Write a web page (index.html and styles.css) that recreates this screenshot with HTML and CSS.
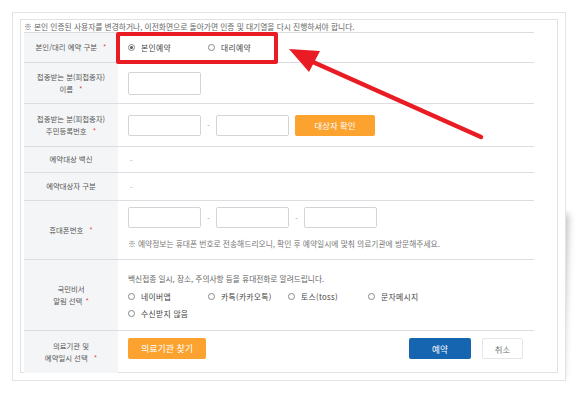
FILE: index.html
```html
<!DOCTYPE html>
<html lang="ko">
<head>
    <meta charset="UTF-8">
    <meta name="viewport" content="width=device-width, initial-scale=1.0">
    <title>예약 정보 입력</title>
    <link rel="stylesheet" href="styles.css">
</head>
<body>

    <div class="sheet">
        <div class="panel">
            <p class="notice">※ 본인 인증된 사용자를 변경하거나, 이전화면으로 돌아가면 인증 및 대기열을 다시 진행하셔야 합니다.</p>

            <!-- 예약 구분 -->
            <div class="row row-type">
                <div class="label"><span>본인/대리 예약 구분<em class="req">*</em></span></div>
                <div class="value">
                    <label class="radio"><span class="dot checked"></span>본인예약</label>
                    <label class="radio"><span class="dot"></span>대리예약</label>
                </div>
            </div>

            <div class="row row-name">
                <div class="label"><span>접종받는 분(피접종자)<br>이름<em class="req">*</em></span></div>
                <div class="value">
                    <input type="text" class="field">
                </div>
            </div>

            <div class="row row-id">
                <div class="label"><span>접종받는 분(피접종자)<br>주민등록번호<em class="req">*</em></span></div>
                <div class="value">
                    <input type="text" class="field">
                    <span class="dash">-</span>
                    <input type="text" class="field">
                    <button class="btn btn-orange btn-check">대상자 확인</button>
                </div>
            </div>

            <div class="row row-vaccine">
                <div class="label"><span>예약대상 백신</span></div>
                <div class="value"><span class="empty">-</span></div>
            </div>

            <div class="row row-target">
                <div class="label"><span>예약대상자 구분</span></div>
                <div class="value"><span class="empty">-</span></div>
            </div>

            <div class="row row-phone">
                <div class="label"><span>휴대폰번호<em class="req">*</em></span></div>
                <div class="value value-col">
                    <div class="inline">
                        <input type="text" class="field">
                        <span class="dash">-</span>
                        <input type="text" class="field">
                        <span class="dash">-</span>
                        <input type="text" class="field">
                    </div>
                    <p class="hint">※ 예약정보는 휴대폰 번호로 전송해드리오니, 확인 후 예약일시에 맞춰 의료기관에 방문해주세요.</p>
                </div>
            </div>

            <div class="row row-alarm">
                <div class="label"><span>국민비서<br>알림 선택<em class="req req-tight">*</em></span></div>
                <div class="value value-col">
                    <p class="desc">백신접종 일시, 장소, 주의사항 등을 휴대전화로 알려드립니다.</p>
                    <div class="options">
                        <label class="radio"><span class="dot"></span>네이버앱</label>
                        <label class="radio"><span class="dot"></span>카톡(카카오톡)</label>
                        <label class="radio"><span class="dot"></span>토스(toss)</label>
                        <label class="radio"><span class="dot"></span>문자메시지</label>
                        <label class="radio"><span class="dot"></span>수신받지 않음</label>
                    </div>
                </div>
            </div>

            <div class="row row-hospital">
                <div class="label"><span>의료기관 및<br>예약일시 선택<em class="req">*</em></span></div>
                <div class="value value-top">
                    <button class="btn btn-orange btn-find">의료기관 찾기</button>
                    <div class="actions">
                        <button class="btn btn-blue">예약</button>
                        <button class="btn btn-cancel">취소</button>
                    </div>
                </div>
            </div>
        </div>

        <!-- annotation -->
        <div class="highlight"></div>
        <svg class="arrow" width="578" height="395" viewBox="0 0 578 395">
            <line x1="304" y1="58" x2="481" y2="137" stroke="#e91c24" stroke-width="4.5" stroke-linecap="round"/>
            <polygon points="289,49 320,51 309,72" fill="#e91c24"/>
        </svg>
    </div>

</body>
</html>
```

FILE: styles.css
```css
/* Page */
body {
    margin: 0;
    background-color: #fff;
    font-family: "Noto Sans CJK KR", "Noto Sans", sans-serif;
    color: #555;
}

/* Outer paper with curled shadow */
.sheet {
    position: relative;
    width: 538px;
    height: 354px;
    margin: 12px 0 0 12px;
    padding: 6px 7px 7px 7px;
    background-color: #fff;
    border: 1px solid #e4e4e4;
}

.sheet::after {
    content: "";
    position: absolute;
    z-index: -1;
    right: 3px;
    bottom: 4px;
    width: 40%;
    height: 45%;
    box-shadow: 4px 5px 7px rgba(0, 0, 0, 0.25);
    transform: skew(-2deg, -1deg);
}

/* Inner box */
.panel {
    height: 352px;
    padding: 0 23px 0 3px;
    border: 1px solid #e2e2e2;
}

.notice {
    margin: 0;
    height: 12px;
    font-size: 7.75px;
    line-height: 13px;
    color: #666;
    white-space: nowrap;
    border-bottom: 1px solid #dcdde1;
}

/* Form rows */
.row {
    display: flex;
    border-bottom: 1px solid #dcdde1;
}

.row:last-child {
    border-bottom: none;
}

.row-type { height: 29px; }
.row-name { height: 40px; }
.row-id { height: 42px; }
.row-vaccine { height: 25px; }
.row-target { height: 27px; }
.row-phone { height: 58px; }
.row-alarm { height: 70px; }
.row-hospital { height: 42px; }

.label {
    width: 94px;
    flex-shrink: 0;
    background-color: #f4f5f7;
    display: flex;
    align-items: center;
    justify-content: center;
    text-align: center;
    font-size: 7.4px;
    line-height: 12.5px;
    color: #555;
}

.req {
    font-style: normal;
    color: #e5464b;
    margin-left: 6px;
}

.req-tight {
    margin-left: 3px;
}

.value {
    flex: 1;
    display: flex;
    align-items: center;
    padding-left: 10px;
    font-size: 7.6px;
    color: #444;
}

.value-col {
    flex-direction: column;
    align-items: flex-start;
    justify-content: flex-start;
}

.value-top {
    align-items: flex-start;
    padding-top: 7px;
}

.inline {
    display: flex;
    align-items: center;
}

/* Inputs */
.field {
    width: 73px;
    height: 21px;
    box-sizing: border-box;
    margin: 0;
    padding: 0;
    border: 1px solid #d3d4d7;
    border-radius: 2px;
    background-color: #fff;
}

.row-name .field {
    height: 23px;
}

.dash {
    width: 15px;
    text-align: center;
    color: #888;
    font-size: 7px;
}

.empty {
    color: #999;
    font-size: 7px;
    margin-left: 2px;
}

/* Radios */
.radio {
    display: flex;
    align-items: center;
    width: 80px;
    font-size: 7.8px;
    color: #444;
    letter-spacing: 0.3px;
}

.dot {
    width: 5px;
    height: 5px;
    border: 1px solid #888;
    border-radius: 50%;
    margin-right: 6px;
    position: relative;
    background-color: #fff;
}

.dot.checked::after {
    content: "";
    position: absolute;
    left: 1px;
    top: 1px;
    width: 3px;
    height: 3px;
    border-radius: 50%;
    background-color: #555;
}

.row-phone .inline {
    margin-top: 6px;
}

.hint {
    margin: 10px 0 0;
    font-size: 7.75px;
    color: #777;
    white-space: nowrap;
}

.desc {
    margin: 13px 0 0;
    font-size: 7.7px;
    color: #666;
    white-space: nowrap;
}

.options {
    display: flex;
    flex-wrap: wrap;
    width: 330px;
    margin-top: 6px;
    row-gap: 5px;
}

.options .radio {
    height: 12px;
}

/* Buttons */
.btn {
    border: none;
    border-radius: 2px;
    font-family: inherit;
    cursor: pointer;
    padding: 0;
}

.btn-orange {
    background-color: #fba22f;
    color: #fff;
}

.btn-check {
    width: 80px;
    height: 21px;
    margin-left: 6px;
    font-size: 8.4px;
}

.btn-find {
    width: 78px;
    height: 21px;
    font-size: 9px;
}

.actions {
    display: flex;
    margin-left: auto;
    margin-right: 11px;
}

.btn-blue {
    width: 62px;
    height: 21px;
    background-color: #1565b0;
    color: #fff;
    font-size: 8.6px;
}

.btn-cancel {
    width: 41px;
    height: 21px;
    margin-left: 11px;
    background-color: #fff;
    border: 1px solid #e6e6e6;
    color: #777;
    font-size: 8.4px;
}

/* Annotation overlay */
.highlight {
    position: absolute;
    left: 103px;
    top: 19px;
    width: 154px;
    height: 24px;
    border: 4px solid #e91c24;
    border-radius: 2px;
}

.arrow {
    position: absolute;
    left: -13px;
    top: -13px;
    pointer-events: none;
}
```
